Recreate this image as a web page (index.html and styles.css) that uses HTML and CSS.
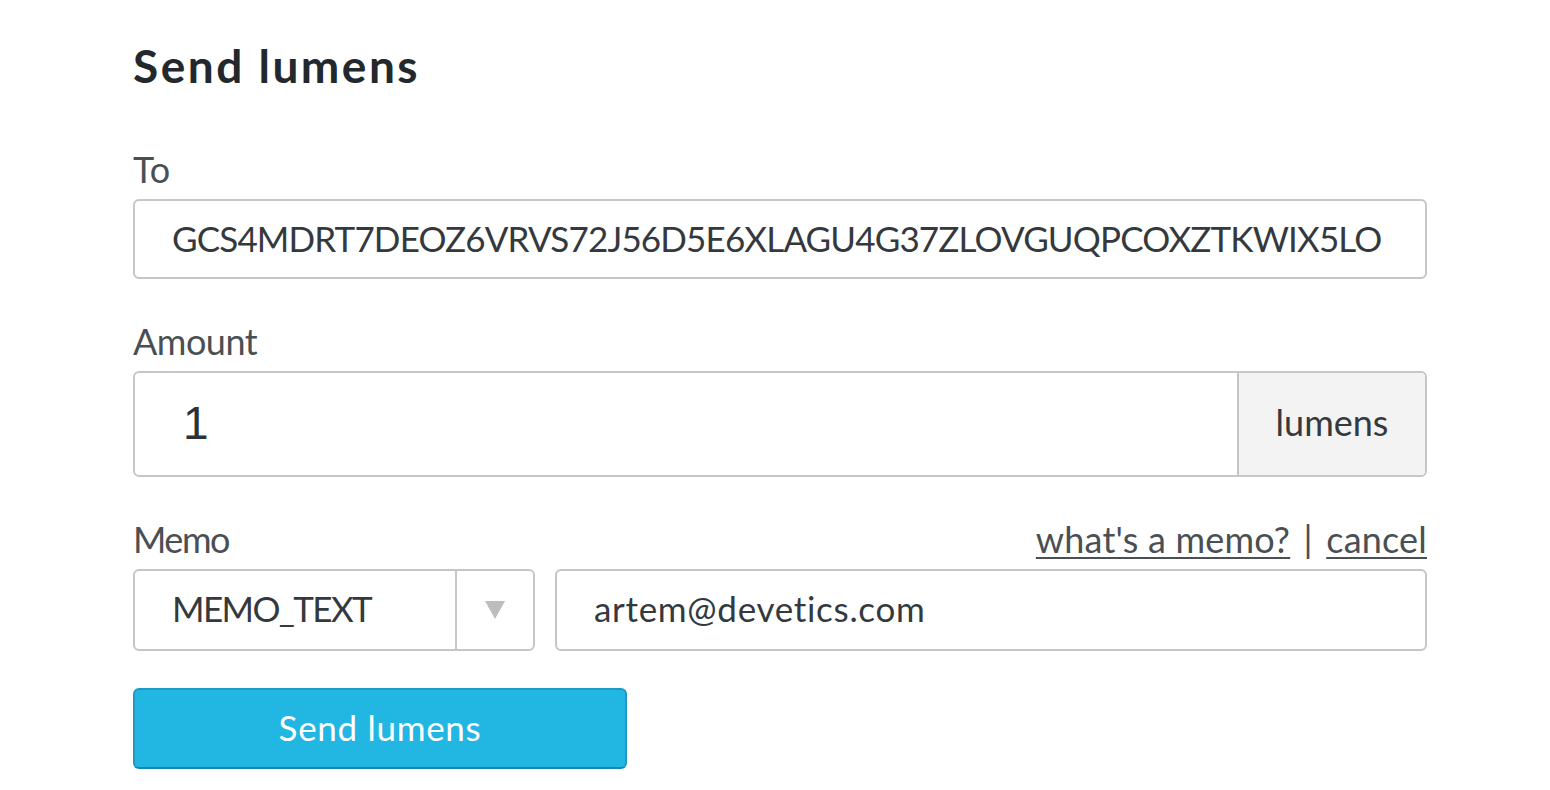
FILE: index.html
```html
<!DOCTYPE html>
<html>
<head>
<meta charset="utf-8">
<title>Send lumens</title>
<link rel="stylesheet" href="styles.css">
</head>
<body>
<div class="page">
  <h1 class="title">Send lumens</h1>

  <div class="field">
    <div class="label-row"><span class="label">To</span></div>
    <div class="box box-to">
      <span class="value value-to">GCS4MDRT7DEOZ6VRVS72J56D5E6XLAGU4G37ZLOVGUQPCOXZTKWIX5LO</span>
    </div>
  </div>

  <div class="field">
    <div class="label-row"><span class="label label-amount">Amount</span></div>
    <div class="box box-amount">
      <span class="amount-value">1</span>
      <span class="addon">lumens</span>
    </div>
  </div>

  <div class="field">
    <div class="label-row">
      <span class="label label-memo">Memo</span>
      <span class="links"><a class="link" href="#">what's a memo?</a> <span class="sep">|</span> <a class="link" href="#">cancel</a></span>
    </div>
    <div class="memo-row">
      <div class="box box-select">
        <span class="value value-select">MEMO_TEXT</span>
        <span class="select-arrow"><span class="triangle"></span></span>
      </div>
      <div class="box box-memo">
        <span class="value value-memo">artem@devetics.com</span>
      </div>
    </div>
  </div>

  <button class="send-btn">Send lumens</button>
</div>
</body>
</html>
```

FILE: styles.css
```css
* { box-sizing: border-box; }
html, body { margin: 0; padding: 0; background: #fff; }
body { font-family: Lato, "Open Sans", sans-serif; color: #3c4146; }

.page {
  width: 1294px;
  margin-left: 133px;
  padding-top: 39px;
}

.title {
  margin: 0 0 55px;
  font-size: 46px;
  line-height: 54px;
  font-weight: 700;
  letter-spacing: 2.5px;
  color: #23282d;
}

.field { margin-bottom: 41px; }
.field:last-of-type { margin-bottom: 37px; }

.label-row {
  display: flex;
  justify-content: space-between;
  align-items: baseline;
  height: 43px;
  line-height: 43px;
  margin-bottom: 8px;
}
.label { font-size: 36px; color: #4a4f54; }
.label-amount { letter-spacing: -0.5px; }
.label-memo { letter-spacing: -1.5px; }

.links { font-size: 36px; color: #4a4f54; letter-spacing: 0.2px; }
.link { color: #4a4f54; text-decoration: underline; text-underline-offset: 4px; text-decoration-thickness: 2px; }
.sep { margin: 0 4px; }

.box {
  display: flex;
  align-items: center;
  border: 2px solid #c6c6c6;
  border-radius: 6px;
  background: #fff;
}
.box-to { height: 80px; padding-left: 37px; padding-bottom: 3px; }
.value { font-size: 35px; color: #34393e; white-space: nowrap; }
.value-to { letter-spacing: -0.84px; }
.value-select { letter-spacing: -1.6px; }
.value-memo { letter-spacing: 0.7px; }

.box-amount { height: 106px; align-items: stretch; }
.amount-value {
  flex: 1;
  display: flex;
  align-items: center;
  padding-left: 48px;
  padding-bottom: 2px;
  font-family: "Liberation Sans", Arial, sans-serif;
  font-size: 46px;
  color: #2c3136;
}
.addon {
  width: 188px;
  display: flex;
  align-items: center;
  justify-content: center;
  padding-bottom: 4px;
  background: #f3f3f3;
  border-left: 2px solid #c6c6c6;
  border-radius: 0 4px 4px 0;
  font-size: 36px;
  color: #34393e;
}

.memo-row { display: flex; gap: 20px; }
.box-select { width: 402px; height: 82px; padding-left: 37px; align-items: stretch; }
.box-select .value { flex: 1; display: flex; align-items: center; padding-bottom: 4px; }
.select-arrow {
  width: 78px;
  border-left: 2px solid #c6c6c6;
  display: flex;
  align-items: center;
  justify-content: center;
}
.triangle {
  width: 0; height: 0;
  border-left: 10px solid transparent;
  border-right: 10px solid transparent;
  border-top: 18px solid #bdbdbd;
}
.box-memo { flex: 1; height: 82px; padding-left: 37px; padding-bottom: 4px; }

.send-btn {
  display: block;
  width: 494px;
  height: 81px;
  margin: 0;
  padding: 0 0 4px;
  background: #22b6e3;
  border: 2px solid #1c9ac2;
  border-bottom-color: #1788ad;
  border-radius: 6px;
  color: #fff;
  font-family: Lato, "Open Sans", sans-serif;
  font-size: 35px;
  letter-spacing: 0.7px;
  cursor: pointer;
}
```
